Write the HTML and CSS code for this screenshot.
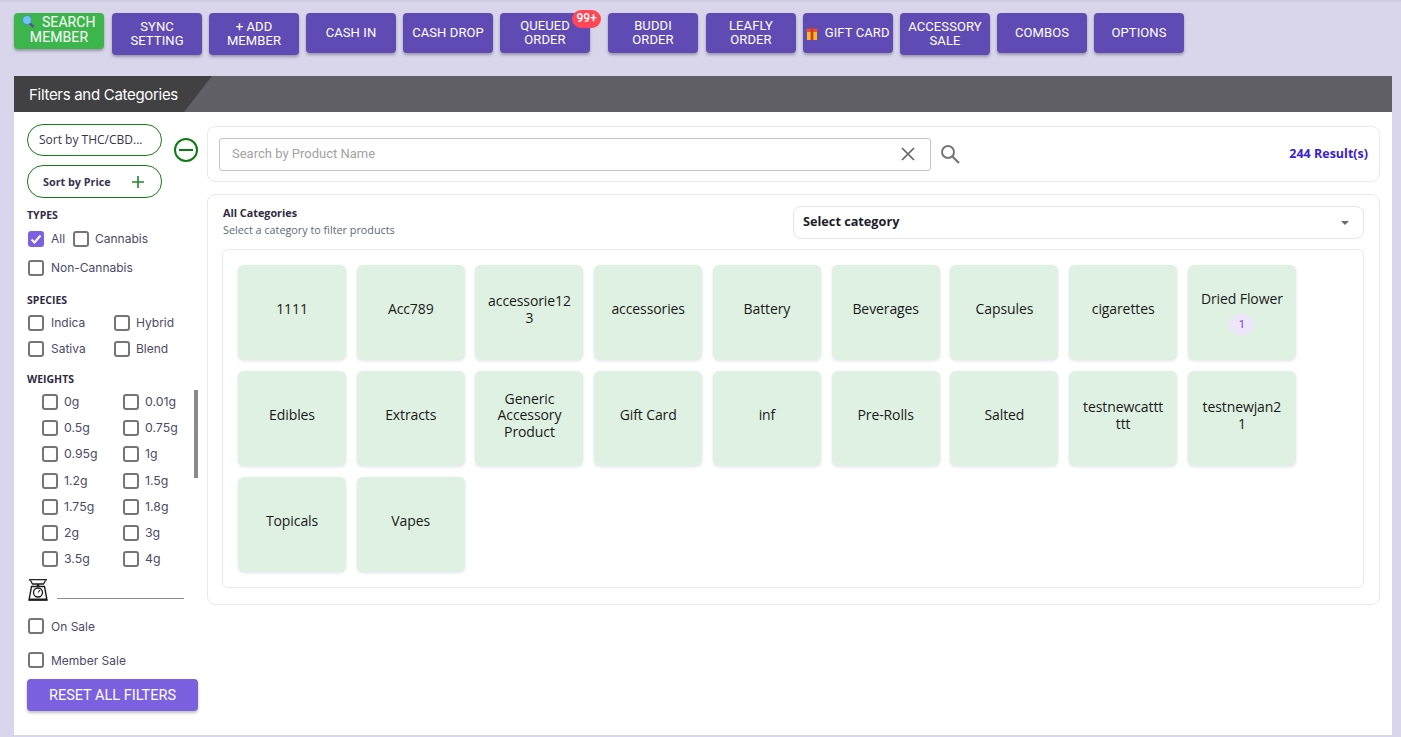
FILE: index.html
```html
<!DOCTYPE html>
<html>
<head>
  <title>Filters and Categories</title>
  <link rel="stylesheet" href="styles.css">
</head>
<body>
  <div class="top-bar">
    <button class="btn btn-search">
      <svg class="lens" viewBox="0 0 13 13" width="13" height="13">
        <path d="M7.500 8l4 4" stroke="#6a3fa0" stroke-width="2.400"/>
        <circle cx="5" cy="5" r="4.500" fill="#6fc3ee" stroke="#3f8fc0" stroke-width="0.900"/>
      </svg>
      SEARCH MEMBER</button>
    <button class="btn btn-tall btn-gap">SYNC SETTING</button>
    <button class="btn btn-tall">+ ADD MEMBER</button>
    <button class="btn">CASH IN</button>
    <button class="btn">CASH DROP</button>
    <button class="btn btn-queued">QUEUED ORDER<span class="badge">99+</span></button>
    <button class="btn">BUDDI ORDER</button>
    <button class="btn btn-gap">LEAFLY ORDER</button>
    <button class="btn btn-gift">
      <svg class="gift" viewBox="0 0 12 13" width="12" height="13">
        <path d="M3 0l3 2 3-2v2.500H3z" fill="#d9372b"/>
        <rect x="0.500" y="2" width="11" height="3" fill="#e0552a"/>
        <rect x="1" y="5" width="10" height="8" fill="#f4bb22"/>
        <rect x="4.700" y="2" width="2.600" height="11" fill="#d9372b"/>
      </svg>
      GIFT CARD</button>
    <button class="btn btn-tall">ACCESSORY SALE</button>
    <button class="btn">COMBOS</button>
    <button class="btn">OPTIONS</button>
  </div>

  <div class="panel">
    <div class="panel-head">
      <div class="panel-tab">Filters and Categories</div>
    </div>
    <div class="panel-body">
      <aside class="sidebar">
        <div class="sort-wrap">
          <div class="sort-pills">
            <div class="pill pill-thc">Sort by THC/CBD...</div>
            <div class="pill pill-price">Sort by Price
              <svg viewBox="0 0 12 12" width="12" height="12"><path d="M6 0v12M0 6h12" stroke="#1f8a24" stroke-width="1.600" fill="none"/></svg>
            </div>
          </div>
          <svg class="minus" viewBox="0 0 24 24" width="24" height="24">
            <circle cx="12" cy="12" r="11" stroke="#0b7d12" stroke-width="2" fill="none"/>
            <path d="M5 12h14" stroke="#0b7d12" stroke-width="2"/>
          </svg>
        </div>

        <h4 class="filter-title title-types">TYPES</h4>
        <div class="check-row row-types">
          <label class="check check-all"><span class="box box-on"><svg viewBox="0 0 16 16" width="16" height="16"><path d="M3.500 8.500l3 3 6-7" stroke="#fff" stroke-width="2" fill="none"/></svg></span>All</label>
          <label class="check"><span class="box box-tight"></span>Cannabis</label>
        </div>
        <div class="check-row row-non">
          <label class="check"><span class="box"></span>Non-Cannabis</label>
        </div>

        <h4 class="filter-title title-species">SPECIES</h4>
        <div class="species-grid">
          <label class="check"><span class="box"></span>Indica</label>
          <label class="check"><span class="box box-tight"></span>Hybrid</label>
          <label class="check"><span class="box"></span>Sativa</label>
          <label class="check"><span class="box box-tight"></span>Blend</label>
        </div>

        <h4 class="filter-title title-weights">WEIGHTS</h4>
        <div class="weights">
          <div class="weight-grid">
            <label class="check"><span class="box"></span>0g</label>
            <label class="check"><span class="box"></span>0.01g</label>
            <label class="check"><span class="box"></span>0.5g</label>
            <label class="check"><span class="box"></span>0.75g</label>
            <label class="check"><span class="box"></span>0.95g</label>
            <label class="check"><span class="box"></span>1g</label>
            <label class="check"><span class="box"></span>1.2g</label>
            <label class="check"><span class="box"></span>1.5g</label>
            <label class="check"><span class="box"></span>1.75g</label>
            <label class="check"><span class="box"></span>1.8g</label>
            <label class="check"><span class="box"></span>2g</label>
            <label class="check"><span class="box"></span>3g</label>
            <label class="check"><span class="box"></span>3.5g</label>
            <label class="check"><span class="box"></span>4g</label>
          </div>
          <div class="scroll-thumb"></div>
        </div>

        <div class="scale-row">
          <svg viewBox="0 0 20 22" width="20" height="22">
            <path d="M1 .8h18" stroke="#1c1c1c" stroke-width="1.500"/>
            <path d="M2.500 1.500l2 3.500h11l2-3.500" fill="#fff" stroke="#1c1c1c" stroke-width="1.300"/>
            <path d="M10 5v2.500" stroke="#1c1c1c" stroke-width="2.500"/>
            <path d="M3.500 7.500h13l2.500 13.500h-18z" fill="#fff" stroke="#1c1c1c" stroke-width="1.400"/>
            <path d="M1 20.500h18" stroke="#1c1c1c" stroke-width="2"/>
            <circle cx="10" cy="13.500" r="4.500" fill="none" stroke="#1c1c1c" stroke-width="1.300"/>
            <path d="M10 13.500l2-2.500" stroke="#1c1c1c" stroke-width="1.200"/>
          </svg>
          <div class="scale-line"></div>
        </div>

        <label class="check check-sale"><span class="box"></span>On Sale</label>
        <label class="check check-member"><span class="box"></span>Member Sale</label>
        <button class="reset-btn">RESET ALL FILTERS</button>
      </aside>

      <main class="content">
        <div class="card search-card">
          <div class="search-input">
            <span class="placeholder">Search by Product Name</span>
            <svg viewBox="0 0 14 14" width="14" height="14"><path d="M1 1l12 12M13 1L1 13" stroke="#666" stroke-width="1.700" fill="none"/></svg>
          </div>
          <svg class="search-icon" viewBox="0 0 20 20" width="20" height="20">
            <circle cx="8" cy="8" r="6" stroke="#757575" stroke-width="2" fill="none"/>
            <path d="M12.500 12.500l6.500 6.500" stroke="#757575" stroke-width="2.200"/>
          </svg>
          <span class="results">244 Result(s)</span>
        </div>

        <div class="card cat-card">
          <div class="cat-head">
            <div class="cat-title">
              <strong>All Categories</strong>
              <span>Select a category to filter products</span>
            </div>
            <div class="cat-select">Select category<i class="caret"></i></div>
          </div>
          <div class="cat-box">
            <div class="cat-grid">
              <div class="tile">1111</div>
              <div class="tile">Acc789</div>
              <div class="tile">accessorie123</div>
              <div class="tile">accessories</div>
              <div class="tile">Battery</div>
              <div class="tile">Beverages</div>
              <div class="tile">Capsules</div>
              <div class="tile">cigarettes</div>
              <div class="tile">Dried Flower<span class="count">1</span></div>
              <div class="tile">Edibles</div>
              <div class="tile">Extracts</div>
              <div class="tile">Generic Accessory Product</div>
              <div class="tile">Gift Card</div>
              <div class="tile">inf</div>
              <div class="tile">Pre-Rolls</div>
              <div class="tile">Salted</div>
              <div class="tile">testnewcatttttt</div>
              <div class="tile">testnewjan21</div>
              <div class="tile">Topicals</div>
              <div class="tile">Vapes</div>
            </div>
          </div>
        </div>
      </main>
    </div>
  </div>
</body>
</html>
```

FILE: styles.css
```css
html, body {
  height: 100%;
}

body {
  margin: 0;
  background-color: #d9d6ec;
  font-family: "Open Sans", sans-serif;
  overflow: hidden;
}

.top-bar {
  display: flex;
  align-items: flex-start;
  gap: 7px;
  padding: 13px 0 0 14px;
  height: 63px;
  box-shadow: inset 0 2px 2px -1px rgba(0, 0, 0, 0.08);
}

.btn {
  position: relative;
  width: 90px;
  height: 40px;
  padding: 0 6px;
  border: none;
  border-radius: 4px;
  background-color: #5f4bb3;
  color: #fff;
  font-family: Roboto, sans-serif;
  font-size: 13px;
  line-height: 14px;
  letter-spacing: 0.100px;
  box-shadow: 0 2px 3px rgba(0, 0, 0, 0.3);
}

.btn-gap {
  margin-left: 1px;
}

.btn-tall {
  height: 42px;
}

.btn-search {
  height: 36px;
  padding: 0 2px 2px;
  background-color: #3cb64c;
  font-size: 14px;
  line-height: 15px;
}

.lens {
  vertical-align: -1px;
  margin-right: 3px;
}

.btn-queued {
  margin-right: 11px;
}

.btn-gift {
  padding: 0;
  white-space: nowrap;
}

.gift {
  vertical-align: -3px;
  margin-right: 3px;
}

.badge {
  position: absolute;
  top: -3px;
  right: -11px;
  padding: 0 4px;
  height: 18px;
  border-radius: 9px;
  background-color: #ff4757;
  font-size: 12px;
  font-weight: 500;
  line-height: 17px;
}

.panel {
  margin: 0 9px 0 14px;
  height: 659px;
  background-color: #fff;
}

.panel-head {
  height: 36px;
  background-color: #616066;
}

.panel-tab {
  width: 183px;
  height: 36px;
  padding-left: 15px;
  background-color: #414042;
  clip-path: polygon(0 0, 100% 0, 170px 100%, 0 100%);
  color: #fff;
  font-family: Inter, sans-serif;
  font-size: 15px;
  line-height: 38px;
  letter-spacing: -0.300px;
}

.panel-body {
  display: flex;
  padding: 12px 12px 0 13px;
}

.sidebar {
  width: 171px;
  margin-right: 9px;
  flex-shrink: 0;
  color: #4c4a68;
  font-family: Inter, sans-serif;
}

.sort-wrap {
  display: flex;
}

.sort-pills {
  display: flex;
  flex-direction: column;
  gap: 9px;
  width: 135px;
}

.pill {
  box-sizing: border-box;
  height: 32px;
  padding-left: 11px;
  border: 1px solid #118015;
  border-radius: 16px;
  color: #37344f;
  font-family: "Open Sans", sans-serif;
  font-size: 12px;
  line-height: 29px;
}

.pill-price {
  display: flex;
  align-items: center;
  height: 33px;
  padding-left: 15px;
  font-size: 10.800px;
  font-weight: 700;
}

.pill-price svg {
  margin-left: 21px;
}

.minus {
  margin: 14px 0 0 12px;
}

.filter-title {
  margin: 0;
  color: #2f2a44;
  font-family: "Open Sans", sans-serif;
  font-size: 10.500px;
  font-weight: 700;
  line-height: 14px;
}

.title-types {
  margin-top: 10px;
}

.title-species {
  margin-top: 17px;
}

.title-weights {
  margin-top: 15px;
}

.check {
  display: flex;
  align-items: center;
  font-size: 12px;
  line-height: 16px;
}

.box {
  box-sizing: border-box;
  flex-shrink: 0;
  width: 16px;
  height: 16px;
  margin-right: 7px;
  border: 2px solid #757575;
  border-radius: 3px;
  background-color: #fff;
}

.box-tight {
  margin-right: 6px;
}

.box-on {
  border: none;
  background-color: #7b61e0;
}

.box svg {
  display: block;
}

.row-types,
.row-non {
  display: flex;
}

.row-types {
  margin-top: 9px;
  margin-left: 1px;
}

.check-all {
  width: 45px;
}

.row-non {
  margin-top: 13px;
  margin-left: 1px;
}

.species-grid {
  display: grid;
  grid-template-columns: 86px 1fr;
  row-gap: 10px;
  margin-top: 8px;
  margin-left: 1px;
}

.weights {
  position: relative;
  height: 188px;
  margin-top: 4px;
  padding-top: 4px;
  box-sizing: border-box;
}

.weight-grid {
  display: grid;
  grid-template-columns: 81px 1fr;
  row-gap: 10.200px;
  margin-left: 15px;
}

.weight-grid .check {
  font-size: 12.300px;
}

.weight-grid .box {
  margin-right: 6px;
}

.scroll-thumb {
  position: absolute;
  top: 0;
  right: 0;
  width: 4px;
  height: 88px;
  background-color: #8a8a8a;
}

.scale-row {
  display: flex;
  align-items: flex-start;
  margin: 1px 0 0 1px;
}

.scale-row svg {
  display: block;
}

.scale-line {
  width: 127px;
  height: 1px;
  margin: 19px 0 0 9px;
  background-color: #8d8d8d;
}

.check-sale {
  margin: 18px 0 0 1px;
}

.check-sale .box,
.check-member .box {
  position: relative;
  top: -1px;
}

.check-member {
  margin: 18px 0 0 1px;
}

.reset-btn {
  display: block;
  width: 171px;
  height: 32px;
  margin-top: 10px;
  border: none;
  border-radius: 4px;
  background-color: #7b61e0;
  color: #fff;
  font-family: Roboto, sans-serif;
  font-size: 14.500px;
  box-shadow: 0 2px 3px rgba(0, 0, 0, 0.25);
}

.content {
  width: 1173px;
  margin-top: 2px;
}

.card {
  box-sizing: border-box;
  border: 1px solid #eae8f5;
  border-radius: 8px;
  background-color: #fff;
}

.search-card {
  display: flex;
  align-items: center;
  height: 56px;
  padding: 0 11px;
}

.search-input {
  box-sizing: border-box;
  display: flex;
  align-items: center;
  justify-content: space-between;
  width: 712px;
  height: 33px;
  padding: 0 15px 0 12px;
  border: 1px solid #c4c4c4;
  border-radius: 3px;
}

.placeholder {
  padding-bottom: 2px;
  color: #a3a3a3;
  font-family: Roboto, sans-serif;
  font-size: 13px;
}

.search-icon {
  margin-left: 9px;
}

.results {
  margin: 0 0 2px auto;
  color: #3a22d0;
  font-size: 12.500px;
  font-weight: 700;
}

.cat-card {
  height: 411px;
  margin-top: 12px;
  padding: 11px 15px 0 15px;
}

.cat-head {
  display: flex;
  justify-content: space-between;
  height: 43px;
}

.cat-title {
  margin-top: -1px;
}

.cat-title strong {
  display: block;
  color: #2f2a44;
  font-size: 10.800px;
  line-height: 15px;
}

.cat-title span {
  display: block;
  margin-top: 2px;
  color: #5d6a7c;
  font-size: 10.800px;
  line-height: 15px;
}

.cat-select {
  box-sizing: border-box;
  display: flex;
  align-items: center;
  justify-content: space-between;
  width: 571px;
  height: 33px;
  padding: 0 14px 3px 9px;
  border: 1px solid #e2e5ee;
  border-radius: 8px;
  color: #1d1d2b;
  font-size: 12.700px;
  font-weight: 700;
}

.caret {
  margin-top: 3px;
  border-left: 4px solid transparent;
  border-right: 4px solid transparent;
  border-top: 4px solid #6a6a75;
}

.cat-box {
  box-sizing: border-box;
  width: 1142px;
  height: 339px;
  margin-left: -1px;
  padding: 15px;
  border: 1px solid #e8eaf0;
  border-radius: 6px;
}

.cat-grid {
  display: grid;
  grid-template-columns: repeat(9, 108px);
  grid-auto-rows: 95px;
  column-gap: 10.740px;
  row-gap: 11px;
}

.tile {
  display: flex;
  flex-direction: column;
  align-items: center;
  justify-content: center;
  padding: 0 12px 6px;
  border-radius: 6px;
  background-color: #dff1e3;
  color: #1a1a1a;
  font-size: 14px;
  line-height: 16.500px;
  letter-spacing: -0.100px;
  text-align: center;
  overflow-wrap: anywhere;
  box-shadow: 0 1px 3px rgba(60, 50, 120, 0.14);
}

.count {
  width: 25px;
  height: 21px;
  margin-top: 6px;
  margin-bottom: -7px;
  border-radius: 50%;
  background-color: #ede6fa;
  color: #7a3fd6;
  font-family: Roboto, sans-serif;
  font-size: 11px;
  line-height: 21px;
}
```
